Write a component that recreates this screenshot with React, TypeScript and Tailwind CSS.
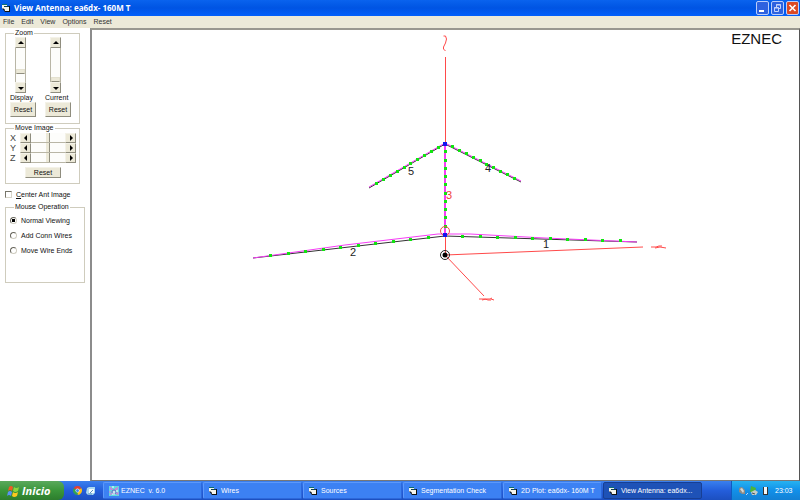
import { useState } from "react";

type Point = [number, number];

type Wire = {
  id: number;
  from: Point;
  to: Point;
  current: string;
  label: Point;
  selected?: boolean;
};

const WIRES: Wire[] = [
  { id: 1, from: [445, 236], to: [637, 242], current: "445,234 470,234 545,238 637,242", label: [543, 248] },
  { id: 2, from: [445, 236], to: [253, 258], current: "253,258 345,245 438,234 445,234", label: [350, 256] },
  { id: 3, from: [445, 144], to: [445, 235], current: "445,144 445,235", label: [446, 199], selected: true },
  { id: 4, from: [445, 144], to: [521, 182], current: "445,143 521,181", label: [485, 172] },
  { id: 5, from: [445, 144], to: [369, 188], current: "445,143 369,187", label: [408, 175] },
];

const STEPS = [1, 2, 3, 4, 5, 6, 7, 8, 9, 10];

const TASKS = ["EZNEC  v. 6.0", "Wires", "Sources", "Segmentation Check", "2D Plot: ea6dx- 160M T", "View Antenna: ea6dx..."];

const raised =
  "border border-t-[#f4f2e8] border-l-[#f4f2e8] border-r-[#8f8d7e] border-b-[#8f8d7e] bg-[#ece9d8]";

function FormIcon() {
  return (
    <svg viewBox="0 0 8 8" className="size-2 shrink-0" aria-hidden="true">
      <path d="M0 0h5v5H0z" fill="#f4f4ee" />
      <path d="M0 0h5v1H0z" fill="#0b6f74" />
      <path d="M0 4l3 4h5V7z" fill="#111" />
      <path d="M2 2h5v1H2z" fill="#0b3f50" />
      <path d="M2 3h5v4H3z" fill="#f4f4ee" />
      <path d="M7 2h1v6H7z" fill="#111" />
    </svg>
  );
}

function EznecIcon() {
  return (
    <svg viewBox="0 0 10 10" className="size-[10px] shrink-0" aria-hidden="true">
      <path d="M0 0h10v10H0z" fill="#64d8dc" />
      <path d="M1 1l3 3M9 1L6 4M1 9l3-3M9 9L6 6" stroke="#e86ad8" />
      <circle cx="5" cy="6" r="2" fill="#c5e6f4" stroke="#5a6cc0" />
      <path d="M1 3h2M6 3h3M0 6h2M8 7h2" stroke="#e86ad8" />
      <path d="M3 1h2M7 5h2M3 8h3" stroke="#fff" />
    </svg>
  );
}

function Arrow({ d }: { d: string }) {
  return (
    <svg viewBox="0 0 8 8" className="size-2" aria-hidden="true">
      <path d={d} fill="#000" />
    </svg>
  );
}

function VScroll({ label, value }: { label: string; value: number }) {
  const [pos, setPos] = useState(value);
  return (
    <div className="flex h-14 w-[11px] flex-col">
      <button
        type="button"
        aria-label={`${label} up`}
        onClick={() => setPos(Math.max(0, pos - 5))}
        className={`flex h-[11px] items-center justify-center ${raised}`}
      >
        <Arrow d="M1 5l3-3 3 3z" />
      </button>
      <input
        type="range"
        aria-label={label}
        value={pos}
        onChange={(e) => setPos(Number(e.target.value))}
        className="m-0 min-h-0 w-[11px] flex-1 appearance-none border-r border-l border-[#b9b6a6] bg-[#fdfdfb] [writing-mode:vertical-lr] [&::-webkit-slider-thumb]:h-[5px] [&::-webkit-slider-thumb]:w-[9px] [&::-webkit-slider-thumb]:appearance-none [&::-webkit-slider-thumb]:border [&::-webkit-slider-thumb]:border-[#e4e1d0] [&::-webkit-slider-thumb]:border-b-[#8f8d7e] [&::-webkit-slider-thumb]:bg-[#ece9d8]"
      />
      <button
        type="button"
        aria-label={`${label} down`}
        onClick={() => setPos(Math.min(100, pos + 5))}
        className={`flex h-[11px] items-center justify-center ${raised}`}
      >
        <Arrow d="M1 3l3 3 3-3z" />
      </button>
    </div>
  );
}

function HScroll({ label }: { label: string }) {
  const [pos, setPos] = useState(50);
  return (
    <div className="flex h-[10px] items-center">
      <span className="w-[10px] text-[9px] leading-[10px] text-[#444]">{label}</span>
      <button
        type="button"
        aria-label={`${label} left`}
        onClick={() => setPos(Math.max(0, pos - 5))}
        className={`flex h-[10px] w-[11px] items-center justify-center ${raised}`}
      >
        <Arrow d="M5 1L2 4l3 3z" />
      </button>
      <input
        type="range"
        aria-label={label}
        value={pos}
        onChange={(e) => setPos(Number(e.target.value))}
        className="m-0 h-[10px] w-0 min-w-0 flex-1 appearance-none border-b border-[#b9b6a6] bg-[#fdfdfb] [&::-webkit-slider-thumb]:h-[9px] [&::-webkit-slider-thumb]:w-1 [&::-webkit-slider-thumb]:appearance-none [&::-webkit-slider-thumb]:border-r [&::-webkit-slider-thumb]:border-[#8f8d7e] [&::-webkit-slider-thumb]:bg-[#ece9d8]"
      />
      <button
        type="button"
        aria-label={`${label} right`}
        onClick={() => setPos(Math.min(100, pos + 5))}
        className={`flex h-[10px] w-[11px] items-center justify-center ${raised}`}
      >
        <Arrow d="M3 1l3 3-3 3z" />
      </button>
    </div>
  );
}

function TitleBar() {
  const box = "flex h-[14px] w-[13px] items-center justify-center rounded-[2px] border border-[#b9cdfb]";
  return (
    <header className="flex h-4 shrink-0 items-center bg-linear-to-b from-[#0a63ee] via-[#0054e3] to-[#0260fb] pr-px pl-[2px]">
      <FormIcon />
      <h1 className="ml-1 flex-1 font-['Open_Sans','Noto_Sans',sans-serif] text-[8px] leading-4 font-bold text-white">
        View Antenna: ea6dx- 160M T
      </h1>
      <div className="flex gap-[2px]">
        <button type="button" aria-label="Minimize" className={`${box} bg-[#2e62df]`}>
          <svg viewBox="0 0 11 12" className="h-3 w-[11px]" aria-hidden="true">
            <path d="M2 8h5v2H2z" fill="#fff" />
          </svg>
        </button>
        <button type="button" aria-label="Restore" className={`${box} bg-[#2e62df]`}>
          <svg viewBox="0 0 11 12" className="h-3 w-[11px]" fill="none" stroke="#c4d4fb" aria-hidden="true">
            <path d="M4.500 5V2.500h4v4H7M4 3h5M2.500 5.500h4v4h-4zM2 6h5" />
          </svg>
        </button>
        <button type="button" aria-label="Close" className={`${box} bg-[#dc4a24]`}>
          <svg viewBox="0 0 11 12" className="h-3 w-[11px]" aria-hidden="true">
            <path d="M2.500 3l6 6M8.500 3l-6 6" stroke="#fff" strokeWidth="1.600" />
          </svg>
        </button>
      </div>
    </header>
  );
}

function SidePanel() {
  const [mode, setMode] = useState("Normal Viewing");
  const button = `${raised} text-center text-[7px]`;
  const legend = "ml-1 px-px text-[7px] leading-2";
  return (
    <aside className="flex w-[90px] shrink-0 flex-col items-start bg-white pt-[1px] pl-[5px] text-[7px] leading-[9px] text-[#111]">
      <fieldset className="flex h-[95px] w-[75px] flex-col border border-[#cfccbd] px-1">
        <legend className={legend}>Zoom</legend>
        <div className="flex gap-[9px]">
          {[
            { name: "Display", value: 72 },
            { name: "Current", value: 100 },
          ].map((s) => (
            <div key={s.name} className="flex w-[26px] flex-col">
              <div className="pl-[5px]">
                <VScroll label={s.name} value={s.value} />
              </div>
              <span className="text-[7px] leading-[9px]">{s.name}</span>
              <button type="button" className={`h-[15px] w-[26px] leading-3 ${button}`}>
                Reset
              </button>
            </div>
          ))}
        </div>
      </fieldset>
      <fieldset className="flex h-[60px] w-[75px] flex-col border border-[#cfccbd] pr-[3px] pl-1">
        <legend className={legend}>Move Image</legend>
        <div className="pt-[1px]">
          <HScroll label="X" />
          <HScroll label="Y" />
          <HScroll label="Z" />
        </div>
        <button type="button" className={`mt-1 ml-[15px] h-[11px] w-9 leading-[9px] ${button}`}>
          Reset
        </button>
      </fieldset>
      <label className="mt-[5px] flex h-[10px] items-center gap-1">
        <input
          type="checkbox"
          className="size-[7px] appearance-none border border-[#d8d5c8] border-t-[#77756a] border-l-[#77756a] bg-white checked:bg-[#333]"
        />
        <span>
          <u>C</u>enter Ant Image
        </span>
      </label>
      <fieldset className="mt-1 h-[80px] w-[80px] border border-[#cfccbd] px-1">
        <legend className={legend}>Mouse Operation</legend>
        <div className="flex flex-col gap-[6px] pt-[5px]">
          {["Normal Viewing", "Add Conn Wires", "Move Wire Ends"].map((m) => (
            <label key={m} className="flex h-[9px] items-center gap-1 whitespace-nowrap">
              <input
                type="radio"
                name="mouse-operation"
                checked={mode === m}
                onChange={() => setMode(m)}
                className="size-[7px] appearance-none rounded-full border border-[#cfccc0] border-t-[#66645a] border-l-[#66645a] bg-white checked:bg-radial checked:from-black checked:from-40% checked:to-white checked:to-50%"
              />
              {m}
            </label>
          ))}
        </div>
      </fieldset>
    </aside>
  );
}

function AntennaView() {
  return (
    <svg
      viewBox="92 30 707 450"
      className="h-full w-full"
      fill="none"
      fontFamily="'Liberation Sans', sans-serif"
      role="img"
      aria-label="Antenna wires"
    >
      {/* axes */}
      <g stroke="#ff4a4a">
        <path d="M445.500 57V255" shapeRendering="crispEdges" />
        <path d="M445 255L643 247M445 255l39 41" />
        <path d="M443.500 36l2 0 1 3-1 4-2 4 0 2 2 2" />
        <path d="M651 247h5l3-1h3M655 248l5-1 6 1" />
        <path d="M479 299h6l3 1h3M482 300l4-1h4l2-1M491 299l3 1" />
      </g>
      {WIRES.map((w) => (
        <g key={w.id}>
          <path
            d={`M${w.from[0]} ${w.from[1]}L${w.to[0]} ${w.to[1]}`}
            stroke={w.selected ? "#ff4a4a" : "#333"}
          />
          <polyline points={w.current} stroke="#f53df5" strokeWidth={w.selected ? 2 : 1} />
          {STEPS.map((i) => (
            <rect
              key={i}
              x={Math.round(w.from[0] + ((w.to[0] - w.from[0]) * i) / 11) - 1}
              y={Math.round(w.from[1] + ((w.to[1] - w.from[1]) * i) / 11) - 2}
              width="3"
              height="3"
              fill="#10e510"
            />
          ))}
          <text x={w.label[0]} y={w.label[1]} fontSize="11" fill={w.selected ? "#f03c3c" : "#222"}>
            {w.id}
          </text>
        </g>
      ))}
      <circle cx="445" cy="231" r="4.500" stroke="#f04848" />
      <path d="M443 142h4v4h-4zM443 233h4v4h-4z" fill="#1414f0" />
      <circle cx="445" cy="255" r="4.500" stroke="#222" />
      <circle cx="445" cy="255" r="2.500" fill="#000" />
      <text x="782" y="44" fontSize="15" textAnchor="end" fill="#111">
        EZNEC
      </text>
    </svg>
  );
}

function TaskBar() {
  return (
    <footer className="flex h-[19px] shrink-0 bg-linear-to-b from-[#3a80ee] via-[#245edb] to-[#1c4fc0] text-[7px] text-white">
      <button
        type="button"
        className="flex w-16 shrink-0 items-center gap-[3px] rounded-r-md bg-linear-to-b from-[#5aa95c] via-[#3a963a] to-[#2d7d2d] pl-[7px] font-['Open_Sans',sans-serif] text-[11px] leading-4 font-bold italic"
      >
        <svg viewBox="0 0 12 12" className="size-3 shrink-0" aria-hidden="true">
          <path d="M2 2q2-2 4 0L5 6Q3 4 1 6z" fill="#f05a24" />
          <path d="M7 2q2 2 5 0l-1 4q-3 2-5 0z" fill="#8cd63c" />
          <path d="M1 7q2-2 4 0l-1 4Q2 9 0 11z" fill="#5a91f5" />
          <path d="M6 7q2 2 5 0l-1 4q-3 2-5 0z" fill="#fbc81e" />
        </svg>
        Inicio
      </button>
      <div className="flex w-[39px] shrink-0 items-center gap-1 pl-[9px]">
        <button type="button" aria-label="Chrome">
          <svg viewBox="0 0 18 18" className="size-[9px]" aria-hidden="true">
            <path d="M9 9L1.200 4.500A9 9 0 0 1 16.800 4.500z" fill="#e34133" />
            <path d="M9 9l7.800-4.500A9 9 0 0 1 9 18z" fill="#fbc116" />
            <path d="M9 9v9A9 9 0 0 1 1.200 4.500z" fill="#34a350" />
            <circle cx="9" cy="9" r="4" fill="#fff" />
            <circle cx="9" cy="9" r="3" fill="#4285f4" />
          </svg>
        </button>
        <button type="button" aria-label="Show desktop">
          <svg viewBox="0 0 10 10" className="size-[10px]" aria-hidden="true">
            <path d="M1 2l2-1h6v6L7 9H2L0 7z" fill="#a9d8f0" />
            <path d="M3 3h5v4H3z" fill="#f5fbff" />
            <path d="M4 7l3-3M2 8h4" stroke="#5b8fbc" />
          </svg>
        </button>
      </div>
      <nav className="flex min-w-0 flex-1 items-start pt-px">
        {TASKS.map((t, i) => (
          <button
            key={t}
            type="button"
            className={`mr-px flex h-[17px] w-[99px] min-w-0 items-center rounded-[2px] border pt-px whitespace-pre ${
              i === 5
                ? "border-[#183f94] bg-[#1e52b7]"
                : "border-[#2d68da] border-t-[#5c98fb] border-l-[#5c98fb] bg-[#3c81f3]"
            } ${i === 0 ? "gap-[2px] pl-[5px]" : "gap-1 pl-[5px]"}`}
          >
            {i === 0 ? <EznecIcon /> : <FormIcon />}
            {t}
          </button>
        ))}
      </nav>
      <div className="flex w-[69px] shrink-0 items-center border-l border-[#0f5cc0] bg-linear-to-b from-[#27b2f0] via-[#1290e9] to-[#1380d4] pt-px pl-[6px]">
        <svg viewBox="0 0 32 10" className="h-[10px] w-8 shrink-0" aria-hidden="true">
          <path d="M1 3q0-2 3-2l3 3v4H4L1 6z" fill="#8b8b88" />
          <path d="M2 3l2-1 2 3-1 2z" fill="#d8d8d2" />
          <path d="M8 9l2-2" stroke="#b5d2ff" />
          <path d="M13 0l5 2-1 4h-5z" fill="#4cb53a" />
          <path d="M13 6l4-2 3 2-2 3h-4z" fill="#c3ccc8" />
          <path d="M14 7l3 1" stroke="#43545c" />
          <path d="M25 1h5v8h-5z" fill="#333" />
          <path d="M26 1h3v7h-3z" fill="#f5f5f5" />
        </svg>
        <time className="ml-[5px]">23:03</time>
      </div>
    </footer>
  );
}

export default function App() {
  return (
    <div className="flex h-screen flex-col bg-white font-['Liberation_Sans',sans-serif]">
      <TitleBar />
      <nav className="flex h-3 shrink-0 items-center gap-[7px] bg-[#ece9d8] pl-[3px] text-[7px] leading-3 text-[#333]">
        {["File", "Edit", "View", "Options", "Reset"].map((m) => (
          <button key={m} type="button">
            {m}
          </button>
        ))}
      </nav>
      <div className="flex min-h-0 flex-1">
        <SidePanel />
        <main className="min-w-0 flex-1 border-t-2 border-r border-b border-l-2 border-t-[#99978f] border-r-[#555] border-b-[#777] border-l-[#8c8c8c]">
          <AntennaView />
        </main>
      </div>
      <TaskBar />
    </div>
  );
}
